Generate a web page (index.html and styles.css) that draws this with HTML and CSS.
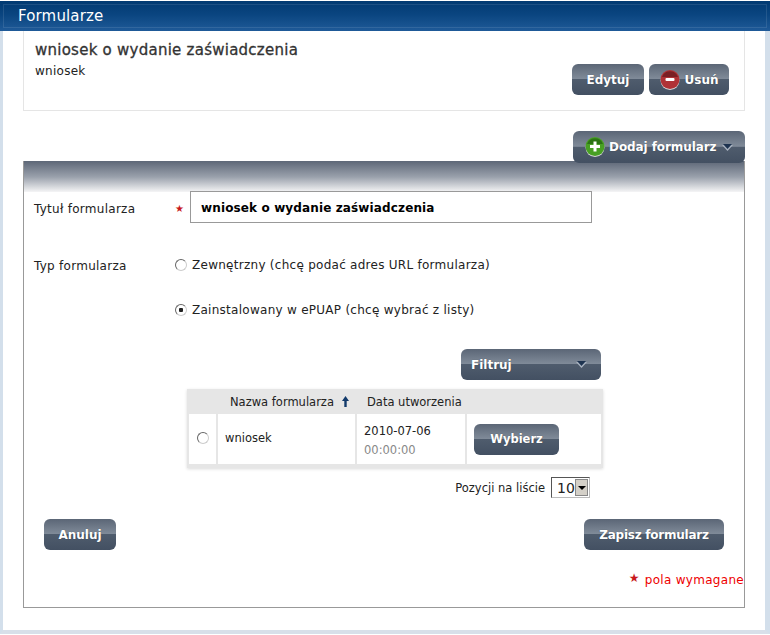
FILE: index.html
```html
<!DOCTYPE html>
<html lang="pl">
<head>
    <meta charset="UTF-8">
    <meta name="viewport" content="width=device-width, initial-scale=1.0">
    <title>Formularze</title>
    <link rel="stylesheet" href="styles.css">
</head>
<body>
    <div class="page">
        <header class="page-header">
            <h1>Formularze</h1>
        </header>

        <div class="content">
            <section class="summary">
                <div class="summary-text">
                    <h2>wniosek o wydanie zaświadczenia</h2>
                    <p>wniosek</p>
                </div>
                <div class="summary-actions">
                    <a href="#" class="btn btn-edit">Edytuj</a>
                    <a href="#" class="btn btn-delete">
                        <svg class="btn-icon" viewBox="0 0 20 20">
                            <circle cx="10" cy="10.5" r="9.5" fill="#d8d8d8"/>
                            <circle cx="10" cy="9.5" r="9.5" fill="#b03236"/>
                            <path d="M2 7a8.500 8.500 0 0 1 16 0z" fill="#7a1f24"/>
                            <rect x="5.5" y="8" width="9" height="3" rx="1" fill="#fff"/>
                        </svg>
                        Usuń
                    </a>
                </div>
            </section>

            <div class="add-row">
                <a href="#" class="btn btn-add">
                    <svg class="btn-icon" viewBox="0 0 20 20">
                        <circle cx="10" cy="10.5" r="9.5" fill="#d8d8d8"/>
                        <circle cx="10" cy="9.5" r="9.5" fill="#48a024"/>
                        <path d="M2 7a8.500 8.500 0 0 1 16 0z" fill="#2c7414"/>
                        <path d="M8.5 4.500h3v3.500h3.500v3h-3.500v3.500h-3v-3.500h-3.500v-3h3.500z" fill="#fff"/>
                    </svg>
                    Dodaj formularz
                    <svg class="caret" viewBox="0 0 11 7">
                        <path d="M0 1h11l-5.500 6z" fill="#a9b3c0"/>
                        <path d="M1 0h9l-4.500 5z" fill="#1d3350"/>
                    </svg>
                </a>
            </div>

            <form class="panel">
                <div class="field-row">
                    <label class="field-label">Tytuł formularza</label>
                    <span class="star">★</span>
                    <input type="text" class="title-input" value="wniosek o wydanie zaświadczenia">
                </div>

                <div class="type-row">
                    <span class="field-label">Typ formularza</span>
                    <div class="type-options">
                        <label class="radio-line"><input type="radio" name="typ"> Zewnętrzny (chcę podać adres URL formularza)</label>
                        <label class="radio-line"><input type="radio" name="typ" checked> Zainstalowany w ePUAP (chcę wybrać z listy)</label>
                    </div>
                </div>

                <div class="filter-row">
                    <a href="#" class="btn btn-filter">
                        Filtruj
                        <svg class="caret" viewBox="0 0 11 7">
                            <path d="M0 1h11l-5.500 6z" fill="#a9b3c0"/>
                            <path d="M1 0h9l-4.500 5z" fill="#1d3350"/>
                        </svg>
                    </a>
                </div>

                <div class="list-box">
                    <table class="list">
                        <thead>
                            <tr>
                                <th class="col-radio"></th>
                                <th class="col-name">Nazwa formularza<svg class="sort" viewBox="0 0 9 11"><path d="M4.500 0l3.500 5h-2.300v6h-2.400v-6h-2.300z" fill="#123a6b"/></svg></th>
                                <th class="col-date">Data utworzenia</th>
                                <th></th>
                            </tr>
                        </thead>
                        <tbody>
                            <tr>
                                <td class="col-radio"><input type="radio" name="wybor"></td>
                                <td class="col-name">wniosek</td>
                                <td class="col-date">2010-07-06<small>00:00:00</small></td>
                                <td class="col-action"><a href="#" class="btn btn-pick">Wybierz</a></td>
                            </tr>
                        </tbody>
                    </table>
                </div>

                <div class="pager">
                    <span>Pozycji na liście</span>
                    <span class="page-size">10<i class="page-size-arrow"></i></span>
                </div>

                <div class="form-actions">
                    <a href="#" class="btn btn-cancel">Anuluj</a>
                    <a href="#" class="btn btn-save">Zapisz formularz</a>
                </div>

                <p class="required"><span class="star">★</span> pola wymagane</p>
            </form>
        </div>
    </div>
</body>
</html>
```

FILE: styles.css
```css
* {
    margin: 0;
    padding: 0;
    box-sizing: border-box;
}

body {
    font-family: "DejaVu Sans", Verdana, sans-serif;
    font-size: 12px;
    background: white;
    color: #222;
    overflow: hidden;
}

.page {
    height: 634px;
    padding-top: 1px;
}

.page-header {
    height: 30px;
    background: linear-gradient(#023a72 0%, #0a4580 45%, #1f5a98 100%);
    padding: 7px 0 0 18px;
    outline: 1px solid rgba(255,255,255,0.1);
    outline-offset: -4px;
}

h1 {
    font-size: 15px;
    font-weight: normal;
    letter-spacing: 0.15px;
    color: white;
    line-height: 17px;
}

.content {
    height: 603px;
    border-left: 3px solid #d3dfeb;
    border-right: 5px solid #d3dfeb;
    border-bottom: 4px solid #d8dfe9;
    padding: 0 20px 0 20px;
}

.summary {
    height: 80px;
    border: 1px solid #e5e5e5;
    border-top: none;
    display: flex;
    justify-content: space-between;
    padding: 11px 15px 0 11px;
}

.summary h2 {
    font-size: 15px;
    font-weight: normal;
    letter-spacing: 0.25px;
    color: #333;
    line-height: 17px;
    -webkit-text-stroke: 0.3px #333;
    margin-bottom: 5px;
}

.summary p {
    line-height: 15px;
    letter-spacing: 0.27px;
}

.summary-actions {
    display: flex;
    gap: 5px;
    padding-top: 22px;
}

.btn {
    display: inline-flex;
    align-items: center;
    justify-content: center;
    height: 31px;
    border-radius: 6px;
    background: linear-gradient(#5b6676 0%, #808b99 48%, #4f5c6d 50%, #435062 100%);
    color: white;
    font-weight: bold;
    text-decoration: none;
    white-space: nowrap;
    text-shadow: 0 0 1px rgba(0,0,0,0.4);
}

.btn-icon {
    width: 20px;
    height: 20px;
    margin-right: 5px;
}

.caret {
    width: 11px;
    height: 7px;
}

.btn-edit {
    width: 72px;
}

.btn-delete {
    width: 80px;
}

.add-row {
    display: flex;
    justify-content: flex-end;
    padding-top: 20px;
    height: 50px;
}

.btn-add {
    width: 172px;
    height: 32px;
    letter-spacing: -0.08px;
    justify-content: flex-start;
    padding-left: 12px;
}

.btn-add .btn-icon {
    margin-right: 4px;
}

.btn-add .caret {
    margin-left: 5px;
}

.panel {
    height: 447px;
    border: 1px solid #999;
    border-top: none;
    background: linear-gradient(#5d6777 0, #9aa1ac 16px, #f5f5f6 31px, white 31px);
    padding: 30px 0 0 10px;
}

.field-row {
    display: flex;
    align-items: center;
    height: 32px;
}

.field-label {
    width: 141px;
    flex-shrink: 0;
    letter-spacing: 0.27px;
}

.field-row .field-label {
    margin-top: 4px;
}

.star {
    color: #c8191c;
    font-size: 10px;
    width: 15px;
    margin-top: 3px;
}

.title-input {
    width: 402px;
    height: 32px;
    border: 1px solid #999;
    padding: 2px 0 0 10px;
    font-family: inherit;
    font-size: 12px;
    font-weight: bold;
    letter-spacing: 0.13px;
    color: black;
}

.type-row {
    display: flex;
    margin-top: 34px;
}

.type-row .field-label {
    padding-top: 2px;
}

.type-options {
    display: flex;
    flex-direction: column;
    gap: 30px;
}

.radio-line {
    display: flex;
    align-items: center;
    gap: 5px;
    height: 15px;
    letter-spacing: 0.27px;
}

input[type="radio"] {
    appearance: none;
    width: 12px;
    height: 12px;
    border-radius: 50%;
    border: 1.5px solid #666;
    border-right-color: #ccc;
    border-bottom-color: #ccc;
    background: white;
    flex-shrink: 0;
}

input[type="radio"]:checked {
    background: radial-gradient(circle, #222 0, #222 2px, white 2.500px);
}

.filter-row {
    display: flex;
    justify-content: flex-end;
    margin: 32px 143px 0 0;
}

.btn-filter {
    width: 140px;
    justify-content: space-between;
    padding: 0 14px 0 10px;
}

.list-box {
    width: 416px;
    height: 79px;
    margin: 9px 0 0 153px;
    box-shadow: 0 1px 3px rgba(0,0,0,0.15);
    background: #e6e6e6;
}

.list {
    width: 100%;
    height: 75px;
    border-collapse: separate;
    border-spacing: 2px 0;
    table-layout: fixed;
    font-size: 11.5px;
}

.list th {
    height: 25px;
    font-weight: normal;
    text-align: left;
    white-space: nowrap;
}

.list td {
    background: white;
}

.list .col-radio {
    width: 27px;
    text-align: center;
}

.list .col-name {
    width: 137px;
    padding-left: 7px;
}

.list th.col-date, .list td.col-date {
    width: 108px;
    padding-left: 7px;
}

.list td.col-date {
    padding-top: 2px;
}

.list th.col-date {
    padding-left: 10px;
}

.list th.col-name {
    padding-left: 12px;
}

.list td.col-name {
    padding-bottom: 2px;
}

.col-date small {
    display: block;
    font-size: 11.5px;
    color: #888;
    margin-top: 5px;
}

.sort {
    width: 9px;
    height: 11px;
    margin-left: 7px;
    vertical-align: -1px;
}

.col-action {
    padding-left: 7px;
}

.btn-pick {
    width: 85px;
}

.pager {
    display: flex;
    justify-content: flex-end;
    align-items: center;
    gap: 6px;
    font-size: 11.5px;
    margin: 9px 154px 0 0;
}

.page-size {
    display: flex;
    align-items: center;
    justify-content: space-between;
    width: 39px;
    height: 21px;
    border: 1px solid #555;
    border-right-color: #bbb;
    border-bottom-color: #bbb;
    padding: 0 1px 0 5px;
    font-size: 14px;
}

.page-size-arrow {
    position: relative;
    width: 15px;
    height: 17px;
    background-color: #d4d0c8;
    border: 1px solid #888;
}

.page-size-arrow::after {
    content: "";
    position: absolute;
    left: 2px;
    top: 6px;
    border: 4px solid transparent;
    border-top: 4px solid black;
    border-bottom: none;
}

.form-actions {
    display: flex;
    justify-content: space-between;
    margin: 21px 20px 0 10px;
}

.btn-cancel {
    width: 72px;
}

.btn-save {
    width: 140px;
    letter-spacing: -0.25px;
}

.required {
    display: flex;
    justify-content: flex-end;
    align-items: center;
    gap: 5px;
    color: #e00;
    letter-spacing: 0.3px;
    margin-top: 23px;
}

.required .star {
    font-size: 12px;
    width: auto;
    margin-top: -5px;
    line-height: 12px;
}
```
